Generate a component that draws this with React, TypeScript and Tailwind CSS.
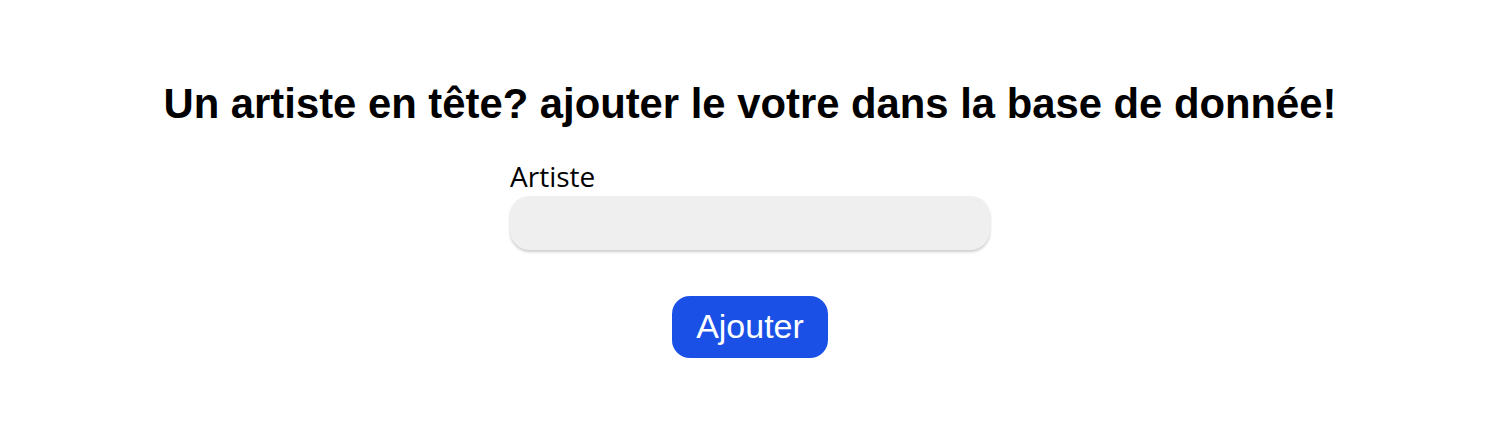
export default function App() {
  return (
    <div className="w-[1500px] h-[431px] bg-white flex flex-col items-center">
      <h1 className="mt-[83px] text-[41.8px] leading-[42px] font-bold text-black whitespace-nowrap" style={{ fontFamily: '"Liberation Sans", Arial, sans-serif' }}>
        Un artiste en tête? ajouter le votre dans la base de donnée!
      </h1>
      <div className="mt-[32px] w-[480px] flex flex-col">
        <label className="text-[28px] leading-[38px] text-black" style={{ fontFamily: '"Open Sans", sans-serif' }}>Artiste</label>
        <input className="mt-[1px] h-[54px] w-[480px] rounded-[20px] bg-[#efefef] shadow-[0_2px_3px_rgba(0,0,0,0.2)] outline-none" />
      </div>
      <button className="mt-[46px] w-[156px] h-[62px] pb-[2px] rounded-[18px] bg-[#1a50e6] text-white text-[34px] leading-[58px]" style={{ fontFamily: '"Liberation Sans", Arial, sans-serif' }}>
        Ajouter
      </button>
    </div>
  );
}
